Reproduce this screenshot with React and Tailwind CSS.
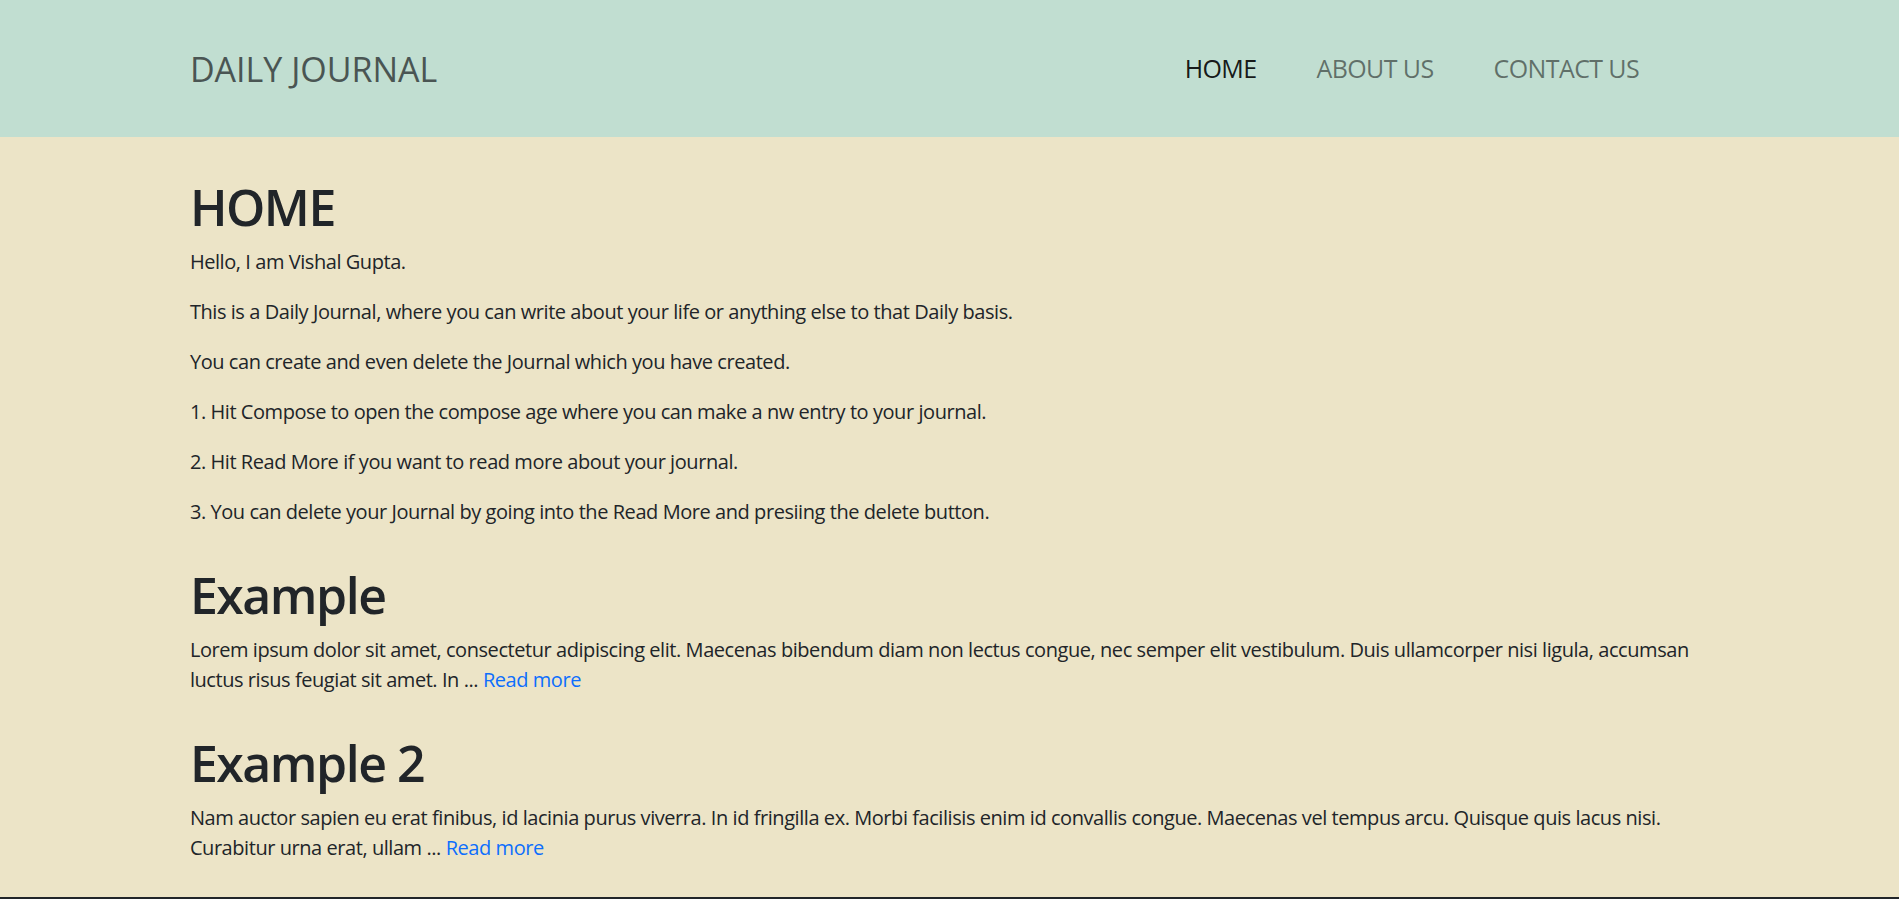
export default function App() {
  const font = { fontFamily: '"Open Sans", "Noto Sans", Arial, sans-serif' };
  return (
    <div className="min-h-screen bg-[#ece4c7] text-[#212529]" style={font}>
      <header className="bg-[#c1ded1] h-[137px]">
        <div className="mx-auto w-[80%] h-full flex items-center justify-between">
          <div className="text-[34px] text-[#4a5553] leading-none">DAILY JOURNAL</div>
          <nav className="flex gap-[60px] mr-[70px] text-[25px] leading-none tracking-[-0.6px]">
            <a className="text-black/90">HOME</a>
            <a className="text-black/50">ABOUT US</a>
            <a className="text-black/50">CONTACT US</a>
          </nav>
        </div>
      </header>
      <main className="mx-auto w-[80%] pt-[40px] pb-[14px] text-[20px] leading-[30px] tracking-[-0.44px]">
        <h1 className="text-[50px] font-semibold leading-[1.2] mb-[10px] tracking-[-1.5px]">HOME</h1>
        <p className="mb-[20px]">Hello, I am Vishal Gupta.</p>
        <p className="mb-[20px]">This is a Daily Journal, where you can write about your life or anything else to that Daily basis.</p>
        <p className="mb-[20px]">You can create and even delete the Journal which you have created.</p>
        <p className="mb-[20px]">1. Hit Compose to open the compose age where you can make a nw entry to your journal.</p>
        <p className="mb-[20px]">2. Hit Read More if you want to read more about your journal.</p>
        <p className="mb-[20px]">3. You can delete your Journal by going into the Read More and presiing the delete button.</p>
        <h1 className="text-[50px] font-semibold leading-[1.2] mt-[38px] mb-[10px] tracking-[-1.5px]">Example</h1>
        <p className="mb-[20px]">Lorem ipsum dolor sit amet, consectetur adipiscing elit. Maecenas bibendum diam non lectus congue, nec semper elit vestibulum. Duis ullamcorper nisi ligula, accumsan luctus risus feugiat sit amet. In ... <a className="text-[#0d6efd]">Read more</a></p>
        <h1 className="text-[50px] font-semibold leading-[1.2] mt-[38px] mb-[10px] tracking-[-1.5px]">Example 2</h1>
        <p className="mb-[20px]">Nam auctor sapien eu erat finibus, id lacinia purus viverra. In id fringilla ex. Morbi facilisis enim id convallis congue. Maecenas vel tempus arcu. Quisque quis lacus nisi. Curabitur urna erat, ullam ... <a className="text-[#0d6efd]">Read more</a></p>
      </main>
      <footer className="bg-[#212529] h-[60px]"></footer>
    </div>
  );
}
